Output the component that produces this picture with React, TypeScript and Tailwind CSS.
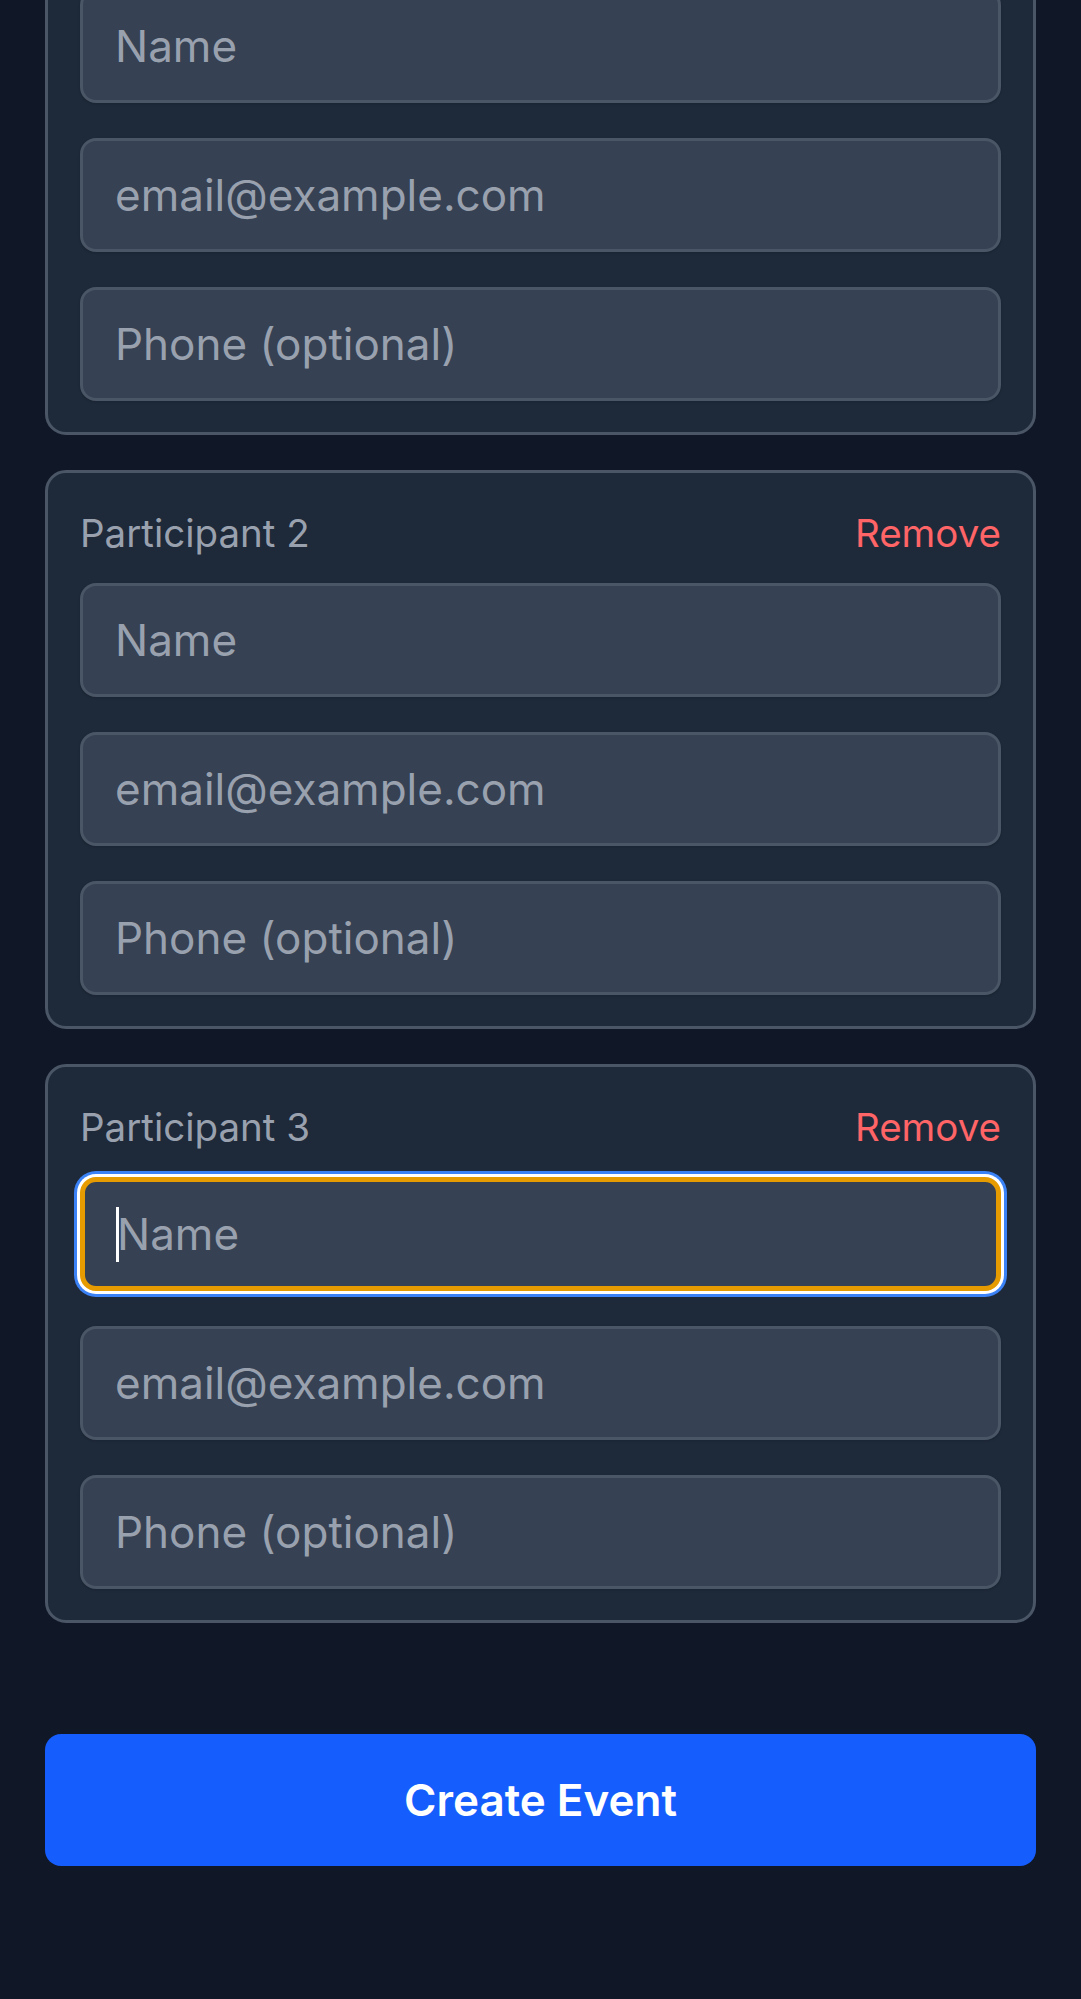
import React from "react";

function Field({ placeholder, focused = false }: { placeholder: string; focused?: boolean }) {
  if (focused) {
    return (
      <div className="relative">
        <input
          placeholder={placeholder}
          className="block h-[114px] w-full rounded-[16px] border-[5px] border-[#e69b00] bg-gray-700 px-[32px] text-[44px] text-white outline-none placeholder:text-gray-400 shadow-[0_0_0_3px_#ffffff,0_0_0_6px_#3b82f6]"
        />
        <span className="pointer-events-none absolute left-[36px] top-[30px] h-[55px] w-[3px] bg-white" />
      </div>
    );
  }
  return (
    <input
      placeholder={placeholder}
      className="block h-[114px] w-full rounded-[16px] border-[3px] border-gray-600 bg-gray-700 px-[32px] text-[44px] text-white shadow-sm outline-none placeholder:text-gray-400"
    />
  );
}

function Participant({ n, focused = false }: { n: number; focused?: boolean }) {
  return (
    <div className="rounded-[21px] border-[3px] border-gray-600 bg-gray-800 px-[32px] pt-[34px] pb-[31px]">
      <div className="mb-[24px] flex h-[52px] items-center justify-between text-[38.5px] leading-[52px]">
        <span className="text-gray-400">Participant {n}</span>
        {n > 1 && (
          <button type="button" className="text-red-400">
            Remove
          </button>
        )}
      </div>
      <div className="flex flex-col gap-[35px]">
        <Field placeholder="Name" focused={focused} />
        <Field placeholder="email@example.com" />
        <Field placeholder="Phone (optional)" />
      </div>
    </div>
  );
}

export default function App() {
  return (
    <div className="min-h-[1999px] overflow-hidden bg-gray-900 font-['Inter',sans-serif]">
      <div className="-mt-[124px] flex flex-col gap-[35px] px-[45px]">
        <Participant n={1} />
        <Participant n={2} />
        <Participant n={3} focused />
      </div>
      <div className="px-[45px] pt-[111px]">
        <button
          type="button"
          className="flex h-[132px] w-full items-center justify-center rounded-[16px] bg-blue-600 text-[44px] font-semibold text-white"
        >
          Create Event
        </button>
      </div>
    </div>
  );
}
